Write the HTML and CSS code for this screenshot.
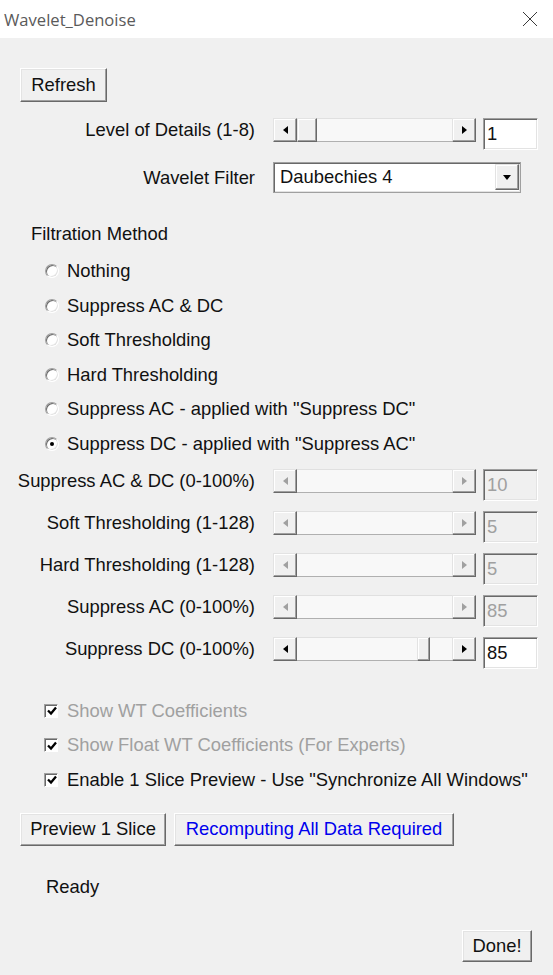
FILE: index.html
```html
<!DOCTYPE html>
<html>
<head>
<meta charset="utf-8">
<title>Wavelet_Denoise</title>
<link rel="stylesheet" href="styles.css">
</head>
<body>
<div class="titlebar">
  <span class="title">Wavelet_Denoise</span>
  <svg class="close" width="16" height="16" viewBox="0 0 16 16"><path d="M1 1 L15 15 M15 1 L1 15" stroke="#3a3a3a" stroke-width="1" fill="none"/></svg>
</div>
<div class="panel">
  <div class="btn refresh">Refresh</div>

  <div class="srow level">
    <div class="lbl">Level of Details (1-8)</div>
    <div class="sb">
      <div class="arr"><span class="tri-l"></span></div>
      <div class="track"><div class="thumb"></div></div>
      <div class="arr"><span class="tri-r"></span></div>
    </div>
    <div class="field">1</div>
  </div>

  <div class="crow">
    <div class="lbl">Wavelet Filter</div>
    <div class="combo">
      <span class="combo-text">Daubechies 4</span>
      <div class="drop"><span class="tri-d"></span></div>
    </div>
  </div>

  <div class="group-title">Filtration Method</div>
  <div class="radios">
    <div class="ritem"><span class="radio"></span>Nothing</div>
    <div class="ritem"><span class="radio"></span>Suppress AC &amp; DC</div>
    <div class="ritem"><span class="radio"></span>Soft Thresholding</div>
    <div class="ritem"><span class="radio"></span>Hard Thresholding</div>
    <div class="ritem"><span class="radio"></span>Suppress AC - applied with "Suppress DC"</div>
    <div class="ritem"><span class="radio on"></span>Suppress DC - applied with "Suppress AC"</div>
  </div>

  <div class="sliders">
    <div class="srow disabled">
      <div class="lbl">Suppress AC &amp; DC (0-100%)</div>
      <div class="sb">
        <div class="arr"><span class="tri-l"></span></div>
        <div class="track"></div>
        <div class="arr"><span class="tri-r"></span></div>
      </div>
      <div class="field">10</div>
    </div>
    <div class="srow disabled">
      <div class="lbl">Soft Thresholding (1-128)</div>
      <div class="sb">
        <div class="arr"><span class="tri-l"></span></div>
        <div class="track"></div>
        <div class="arr"><span class="tri-r"></span></div>
      </div>
      <div class="field">5</div>
    </div>
    <div class="srow disabled">
      <div class="lbl">Hard Thresholding (1-128)</div>
      <div class="sb">
        <div class="arr"><span class="tri-l"></span></div>
        <div class="track"></div>
        <div class="arr"><span class="tri-r"></span></div>
      </div>
      <div class="field">5</div>
    </div>
    <div class="srow disabled">
      <div class="lbl">Suppress AC (0-100%)</div>
      <div class="sb">
        <div class="arr"><span class="tri-l"></span></div>
        <div class="track"></div>
        <div class="arr"><span class="tri-r"></span></div>
      </div>
      <div class="field">85</div>
    </div>
    <div class="srow">
      <div class="lbl">Suppress DC (0-100%)</div>
      <div class="sb">
        <div class="arr"><span class="tri-l"></span></div>
        <div class="track"><div class="thumb" style="margin-left:120px;width:13px"></div></div>
        <div class="arr"><span class="tri-r"></span></div>
      </div>
      <div class="field">85</div>
    </div>
  </div>

  <div class="checks">
    <div class="citem disabled"><span class="cbox"><svg width="10" height="10" viewBox="0 0 10 10"><path d="M1 4.5 L4 7.5 L9 1.5" stroke="#000" stroke-width="2.3" fill="none"/></svg></span>Show WT Coefficients</div>
    <div class="citem disabled"><span class="cbox"><svg width="10" height="10" viewBox="0 0 10 10"><path d="M1 4.5 L4 7.5 L9 1.5" stroke="#000" stroke-width="2.3" fill="none"/></svg></span>Show Float WT Coefficients (For Experts)</div>
    <div class="citem"><span class="cbox"><svg width="10" height="10" viewBox="0 0 10 10"><path d="M1 4.5 L4 7.5 L9 1.5" stroke="#000" stroke-width="2.3" fill="none"/></svg></span>Enable 1 Slice Preview - Use "Synchronize All Windows"</div>
  </div>

  <div class="brow">
    <div class="btn preview">Preview 1 Slice</div>
    <div class="btn recompute">Recomputing All Data Required</div>
  </div>

  <div class="status">Ready</div>

  <div class="btn done">Done!</div>
</div>
</body>
</html>
```

FILE: styles.css
```css
* { box-sizing: border-box; }
html, body { margin: 0; padding: 0; }
body {
  width: 553px;
  height: 975px;
  overflow: hidden;
  background: #f0f0f0;
  font-family: "Liberation Sans", Arial, sans-serif;
  font-size: 18.4px;
  color: #111;
}

.titlebar {
  height: 38px;
  background: #fff;
  display: flex;
  align-items: center;
  justify-content: space-between;
  padding: 0 15px 0 4px;
}
.title {
  font-family: "Open Sans", "Noto Sans", sans-serif;
  font-size: 16.6px;
  color: #5a5a5a;
}
.close { display: block; }

.panel { display: flex; flex-direction: column; }

.btn {
  display: flex;
  align-items: center;
  justify-content: center;
  background: #f0f0f0;
  border: 1px solid;
  border-color: #ffffff #696969 #696969 #ffffff;
  box-shadow: inset -1px -1px 0 #a0a0a0, inset 1px 1px 0 #e3e3e3;
  white-space: nowrap;
}
.refresh {
  align-self: flex-start;
  margin: 30px 0 0 20px;
  width: 87px;
  height: 34px;
}

.srow { display: flex; align-items: flex-start; }
.lbl {
  width: 255px;
  text-align: right;
  white-space: nowrap;
  line-height: 24px;
  height: 24px;
}
.level { margin-top: 16px; }

.sb {
  margin-left: 18px;
  width: 203px;
  height: 24px;
  display: flex;
}
.arr {
  width: 24px;
  height: 24px;
  flex: none;
  display: flex;
  align-items: center;
  justify-content: center;
  background: #f0f0f0;
  border: 1px solid;
  border-color: #e3e3e3 #696969 #696969 #e3e3e3;
  box-shadow: inset -1px -1px 0 #a0a0a0, inset 1px 1px 0 #fff;
}
.track {
  flex: 1;
  height: 24px;
  display: flex;
  background: #f8f8f8;
  border-top: 1px solid #e0e0e0;
  border-bottom: 1px solid #b0b0b0;
}
.thumb {
  width: 20px;
  height: 24px;
  margin-top: -1px;
  background: #f0f0f0;
  border: 1px solid;
  border-color: #e3e3e3 #696969 #696969 #e3e3e3;
  box-shadow: inset -1px -1px 0 #a0a0a0, inset 1px 1px 0 #fff;
}
.tri-l, .tri-r, .tri-d { display: block; width: 0; height: 0; }
.tri-l {
  border-top: 4.5px solid transparent;
  border-bottom: 4.5px solid transparent;
  border-right: 5px solid #000;
}
.tri-r {
  border-top: 4.5px solid transparent;
  border-bottom: 4.5px solid transparent;
  border-left: 5px solid #000;
}
.tri-d {
  border-left: 4.5px solid transparent;
  border-right: 4.5px solid transparent;
  border-top: 5px solid #000;
}

.field {
  margin-left: 7px;
  width: 55px;
  height: 32px;
  background: #fff;
  border: 1px solid;
  border-color: #a0a0a0 #ffffff #ffffff #a0a0a0;
  box-shadow: inset 1px 1px 0 #696969, inset -1px -1px 0 #e3e3e3;
  padding: 0 0 0 3px;
  line-height: 30px;
}
.disabled .field { background: #f0f0f0; color: #a0a0a0; }
.disabled .tri-l { border-right-color: #a0a0a0; }
.disabled .tri-r { border-left-color: #a0a0a0; }

.crow { display: flex; align-items: flex-start; margin-top: 12px; }
.crow .lbl { line-height: 31px; height: 31px; }
.combo {
  margin-left: 18px;
  width: 248px;
  height: 31px;
  display: flex;
  align-items: center;
  justify-content: space-between;
  background: #fff;
  border: 1px solid #a0a0a0;
  box-shadow: inset 1px 1px 0 #696969, inset -1px -1px 0 #e3e3e3;
  padding: 1px 1px 2px 6px;
}
.drop {
  width: 24px;
  height: 26px;
  display: flex;
  align-items: center;
  justify-content: center;
  background: #f0f0f0;
  border: 1px solid;
  border-color: #e3e3e3 #696969 #696969 #e3e3e3;
  box-shadow: inset -1px -1px 0 #a0a0a0, inset 1px 1px 0 #fff;
}

.group-title {
  margin-top: 31px;
  padding-left: 31px;
  line-height: 20px;
  height: 20px;
}
.radios { margin-top: 9.7px; padding-left: 45px; }
.ritem {
  height: 34.6px;
  display: flex;
  align-items: center;
  white-space: nowrap;
}
.radio {
  width: 14px;
  height: 14px;
  flex: none;
  margin-right: 8px;
  border-radius: 50%;
  background: #fff;
  border: 1px solid;
  border-color: #a0a0a0 #ffffff #ffffff #a0a0a0;
  box-shadow: inset 1px 1px 0 #696969, inset -1px -1px 0 #e3e3e3;
  position: relative;
}
.radio.on::after {
  content: "";
  position: absolute;
  left: 4px;
  top: 4px;
  width: 4px;
  height: 4px;
  border-radius: 50%;
  background: #000;
}

.sliders {
  margin-top: 7.7px;
  display: flex;
  flex-direction: column;
  gap: 10px;
}

.checks { margin-top: 24.75px; padding-left: 44px; }
.citem {
  height: 34.5px;
  display: flex;
  align-items: center;
  white-space: nowrap;
}
.citem.disabled { color: #a0a0a0; }
.cbox {
  width: 14px;
  height: 14px;
  flex: none;
  margin-right: 9px;
  background: #fff;
  border: 1px solid;
  border-color: #a0a0a0 #ffffff #ffffff #a0a0a0;
  box-shadow: inset 1px 1px 0 #696969;
  display: flex;
  align-items: center;
  justify-content: center;
  padding: 1px 0 0 1px;
}
.cbox svg { display: block; }

.brow {
  margin-top: 15.75px;
  padding-left: 20px;
  display: flex;
  gap: 8px;
}
.preview { width: 146px; height: 33px; }
.recompute { width: 280px; height: 33px; color: #0000ee; }

.status {
  margin-top: 31px;
  padding-left: 46px;
  line-height: 20px;
  height: 20px;
}

.done {
  align-self: flex-end;
  margin: 33px 21px 0 0;
  width: 70px;
  height: 32px;
}
```
